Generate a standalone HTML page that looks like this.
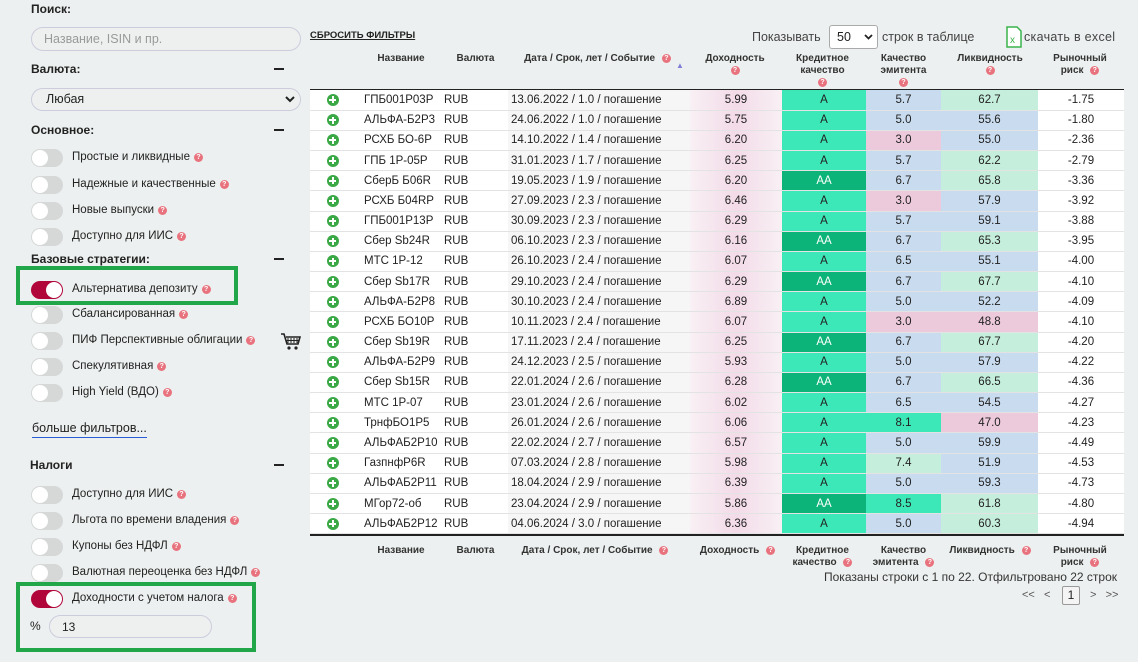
<!DOCTYPE html>
<html><head><meta charset="utf-8"><style>
*{box-sizing:border-box;margin:0;padding:0}
body{width:1138px;height:662px;background:#edf0f0;font-family:"Liberation Sans",sans-serif;color:#222;position:relative;overflow:hidden;font-size:12px}
.a{position:absolute}
.h{font-weight:bold;font-size:12px;color:#222}
.minus{position:absolute;left:274px;width:10px;height:2px;background:#222}
.tg{position:absolute;left:31px;width:32px;height:18px;border-radius:9px;background:#d6d8d8}
.tg::after{content:"";position:absolute;left:1px;top:1px;width:16px;height:16px;border-radius:50%;background:#fff}
.tg.on{background:#b0063a}
.tg.on::after{left:15px}
.lb{position:absolute;left:72px;font-size:11.5px;color:#222}
.q{display:inline-block;width:9px;height:9px;border-radius:50%;background:#e8737e;color:#fff;font-size:7px;line-height:9px;text-align:center;font-weight:bold;vertical-align:1px;margin-left:4px}
.inp{position:absolute;border:1px solid #ccd;border-radius:12px;background:#eef0f0}
.grn{position:absolute;border:4px solid #21a74a}
table{position:absolute;left:310px;top:90px;width:814px;border-collapse:collapse;table-layout:fixed;font-size:11.5px;background:#fff}
td{height:20.18px;border-bottom:1px solid #e3e3e3;padding:0;white-space:nowrap}
td.n{padding-left:9px}
td.r{padding-left:4px}
td.c{text-align:center}
td.p{text-align:center}
.pl{display:inline-block;width:12px;height:12px;border-radius:50%;background:#3aa845;position:relative;vertical-align:middle}
.pl::before{content:"";position:absolute;left:2.5px;top:5px;width:7px;height:2px;background:#fff}
.pl::after{content:"";position:absolute;left:5px;top:2.5px;width:2px;height:7px;background:#fff}
td.d{background:#f6f6f6;padding-left:3px}
td.y{background:linear-gradient(90deg,#f8f0f4,#f3dbe8,#f8f0f4);text-align:center}
.A{background:#3de8b8;text-align:center}
.AA{background:#0db47a;color:#fff;text-align:center}
.b{background:#c9dcef;text-align:center}
.k{background:#edcadb;text-align:center}
.g{background:#c5efdc;text-align:center}
.G{background:#3de8b8;text-align:center}
.th{position:absolute;font-size:10px;font-weight:bold;color:#333;text-align:center;line-height:12px}
</style></head><body>

<div class="a h" style="left:31px;top:2px">Поиск:</div>
<div class="inp" style="left:31px;top:27px;width:270px;height:24px"></div>
<div class="a" style="left:44px;top:32px;color:#999;font-size:12.5px">Название, ISIN и пр.</div>
<div class="a h" style="left:31px;top:62px">Валюта:</div><div class="minus" style="top:68px"></div>
<div class="inp" style="left:31px;top:88px;width:270px;height:23px"></div>
<div class="a" style="left:46px;top:92px;font-size:12.5px">Любая</div>
<svg class="a" style="left:285px;top:96px" width="10" height="7" viewBox="0 0 10 7"><path d="M1 1l4 4 4-4" fill="none" stroke="#222" stroke-width="2"/></svg>
<div class="a h" style="left:31px;top:123px">Основное:</div><div class="minus" style="top:129px"></div>

<div class="tg" style="top:149px"></div><div class="lb" style="top:151px">Простые и ликвидные<span class="q">?</span></div>
<div class="tg" style="top:176px"></div><div class="lb" style="top:178px">Надежные и качественные<span class="q">?</span></div>
<div class="tg" style="top:202px"></div><div class="lb" style="top:204px">Новые выпуски<span class="q">?</span></div>
<div class="tg" style="top:228px"></div><div class="lb" style="top:230px">Доступно для ИИС<span class="q">?</span></div>
<div class="a h" style="left:31px;top:252px">Базовые стратегии:</div><div class="minus" style="top:258px"></div>
<div class="grn" style="left:16px;top:266px;width:222px;height:39px"></div>
<div class="tg on" style="top:281px"></div><div class="lb" style="top:283px">Альтернатива депозиту<span class="q">?</span></div>
<div class="tg" style="top:306px"></div><div class="lb" style="top:308px">Сбалансированная<span class="q">?</span></div>
<div class="tg" style="top:332px"></div><div class="lb" style="top:334px">ПИФ Перспективные облигации<span class="q">?</span></div>
<svg class="a" style="left:281px;top:333px" width="20" height="18" viewBox="0 0 20 18"><path d="M0 1h3l3 10h11l2-7H5" fill="none" stroke="#222" stroke-width="1.6"/><path d="M7 5v5M10 5v5M13 5v5M16 5v5M5 7.5h13" stroke="#222" stroke-width="1"/><circle cx="8" cy="15" r="1.6" fill="#222"/><circle cx="15" cy="15" r="1.6" fill="#222"/></svg>
<div class="tg" style="top:358px"></div><div class="lb" style="top:360px">Спекулятивная<span class="q">?</span></div>
<div class="tg" style="top:384px"></div><div class="lb" style="top:386px">High Yield (ВДО)<span class="q">?</span></div>
<div class="a" style="left:32px;top:421px;font-size:12.5px;border-bottom:1px solid #2a5bd7;padding-bottom:2px">больше фильтров...</div>
<div class="a h" style="left:30px;top:458px">Налоги</div><div class="minus" style="top:464px"></div>
<div class="tg" style="top:486px"></div><div class="lb" style="top:488px">Доступно для ИИС<span class="q">?</span></div>
<div class="tg" style="top:512px"></div><div class="lb" style="top:514px">Льгота по времени владения<span class="q">?</span></div>
<div class="tg" style="top:538px"></div><div class="lb" style="top:540px">Купоны без НДФЛ<span class="q">?</span></div>
<div class="tg" style="top:564px"></div><div class="lb" style="top:566px">Валютная переоценка без НДФЛ<span class="q">?</span></div>
<div class="grn" style="left:16px;top:582px;width:240px;height:70px"></div>
<div class="tg on" style="top:590px"></div><div class="lb" style="top:592px">Доходности с учетом налога<span class="q">?</span></div>
<div class="a" style="left:30px;top:619px;font-size:12px">%</div>
<div class="inp" style="left:49px;top:615px;width:163px;height:23px"></div>
<div class="a" style="left:62px;top:620px;font-size:12px">13</div>

<div class="a" style="left:310px;top:30px;font-size:9.5px;font-weight:bold;text-decoration:underline">СБРОСИТЬ ФИЛЬТРЫ</div>
<div class="a" style="left:752px;top:30px;font-size:12.5px;color:#444">Показывать</div>
<div class="a" style="left:829px;top:25px;width:49px;height:24px;border:1px solid #aaa;border-radius:3px;background:#fff;font-size:12.5px"><span class="a" style="left:7px;top:4px">50</span><svg class="a" style="left:34px;top:8px" width="9" height="6" viewBox="0 0 9 6"><path d="M1 1l3.5 3.5L8 1" fill="none" stroke="#222" stroke-width="1.8"/></svg></div>
<div class="a" style="left:882px;top:30px;font-size:12.5px;color:#444">строк в таблице</div>
<svg class="a" style="left:1006px;top:26px" width="16" height="22" viewBox="0 0 16 22"><path d="M1 1h10l4 4v16H1z" fill="#fff" stroke="#3ab34a" stroke-width="1.5"/><text x="4" y="17" font-size="10" fill="#3ab34a" font-family="Liberation Sans">x</text></svg>
<div class="a" style="left:1024px;top:30px;font-size:12.5px;color:#444;letter-spacing:.3px">скачать в excel</div>

<div class="th" style="left:362px;top:53px;width:78px">Название</div>
<div class="th" style="left:448px;top:53px;width:55px">Валюта</div>
<div class="th" style="left:515px;top:53px;width:165px">Дата / Срок, лет / Событие <span class="q">?</span></div>
<div class="a" style="left:676px;top:61px;color:#7f7fd6;font-size:8px">&#9650;</div>
<div class="th" style="left:695px;top:53px;width:80px">Доходность<br><span class="q" style="margin:0">?</span></div>
<div class="th" style="left:785px;top:53px;width:75px">Кредитное<br>качество<br><span class="q" style="margin:0">?</span></div>
<div class="th" style="left:866px;top:53px;width:75px">Качество<br>эмитента<br><span class="q" style="margin:0">?</span></div>
<div class="th" style="left:945px;top:53px;width:90px">Ликвидность<br><span class="q" style="margin:0">?</span></div>
<div class="th" style="left:1045px;top:53px;width:70px">Рыночный<br>риск <span class="q">?</span></div>
<div class="a" style="left:310px;top:89px;width:814px;height:1.5px;background:#222"></div>

<table>
<colgroup><col style="width:45px"><col style="width:85px"><col style="width:68px"><col style="width:182px"><col style="width:92px"><col style="width:84px"><col style="width:75px"><col style="width:97px"><col style="width:86px"></colgroup>
<tr><td class="p"><i class="pl"></i></td><td class="n">ГПБ001Р03Р</td><td class="r">RUB</td><td class="d">13.06.2022 / 1.0 / погашение</td><td class="y">5.99</td><td class="A">A</td><td class="b">5.7</td><td class="g">62.7</td><td class="c">-1.75</td></tr>
<tr><td class="p"><i class="pl"></i></td><td class="n">АЛЬФА-Б2Р3</td><td class="r">RUB</td><td class="d">24.06.2022 / 1.0 / погашение</td><td class="y">5.75</td><td class="A">A</td><td class="b">5.0</td><td class="b">55.6</td><td class="c">-1.80</td></tr>
<tr><td class="p"><i class="pl"></i></td><td class="n">РСХБ БО-6Р</td><td class="r">RUB</td><td class="d">14.10.2022 / 1.4 / погашение</td><td class="y">6.20</td><td class="A">A</td><td class="k">3.0</td><td class="b">55.0</td><td class="c">-2.36</td></tr>
<tr><td class="p"><i class="pl"></i></td><td class="n">ГПБ 1Р-05Р</td><td class="r">RUB</td><td class="d">31.01.2023 / 1.7 / погашение</td><td class="y">6.25</td><td class="A">A</td><td class="b">5.7</td><td class="g">62.2</td><td class="c">-2.79</td></tr>
<tr><td class="p"><i class="pl"></i></td><td class="n">СберБ Б06R</td><td class="r">RUB</td><td class="d">19.05.2023 / 1.9 / погашение</td><td class="y">6.20</td><td class="AA">AA</td><td class="b">6.7</td><td class="g">65.8</td><td class="c">-3.36</td></tr>
<tr><td class="p"><i class="pl"></i></td><td class="n">РСХБ Б04RP</td><td class="r">RUB</td><td class="d">27.09.2023 / 2.3 / погашение</td><td class="y">6.46</td><td class="A">A</td><td class="k">3.0</td><td class="b">57.9</td><td class="c">-3.92</td></tr>
<tr><td class="p"><i class="pl"></i></td><td class="n">ГПБ001Р13Р</td><td class="r">RUB</td><td class="d">30.09.2023 / 2.3 / погашение</td><td class="y">6.29</td><td class="A">A</td><td class="b">5.7</td><td class="b">59.1</td><td class="c">-3.88</td></tr>
<tr><td class="p"><i class="pl"></i></td><td class="n">Сбер Sb24R</td><td class="r">RUB</td><td class="d">06.10.2023 / 2.3 / погашение</td><td class="y">6.16</td><td class="AA">AA</td><td class="b">6.7</td><td class="g">65.3</td><td class="c">-3.95</td></tr>
<tr><td class="p"><i class="pl"></i></td><td class="n">МТС 1Р-12</td><td class="r">RUB</td><td class="d">26.10.2023 / 2.4 / погашение</td><td class="y">6.07</td><td class="A">A</td><td class="b">6.5</td><td class="b">55.1</td><td class="c">-4.00</td></tr>
<tr><td class="p"><i class="pl"></i></td><td class="n">Сбер Sb17R</td><td class="r">RUB</td><td class="d">29.10.2023 / 2.4 / погашение</td><td class="y">6.29</td><td class="AA">AA</td><td class="b">6.7</td><td class="g">67.7</td><td class="c">-4.10</td></tr>
<tr><td class="p"><i class="pl"></i></td><td class="n">АЛЬФА-Б2Р8</td><td class="r">RUB</td><td class="d">30.10.2023 / 2.4 / погашение</td><td class="y">6.89</td><td class="A">A</td><td class="b">5.0</td><td class="b">52.2</td><td class="c">-4.09</td></tr>
<tr><td class="p"><i class="pl"></i></td><td class="n">РСХБ БО10Р</td><td class="r">RUB</td><td class="d">10.11.2023 / 2.4 / погашение</td><td class="y">6.07</td><td class="A">A</td><td class="k">3.0</td><td class="k">48.8</td><td class="c">-4.10</td></tr>
<tr><td class="p"><i class="pl"></i></td><td class="n">Сбер Sb19R</td><td class="r">RUB</td><td class="d">17.11.2023 / 2.4 / погашение</td><td class="y">6.25</td><td class="AA">AA</td><td class="b">6.7</td><td class="g">67.7</td><td class="c">-4.20</td></tr>
<tr><td class="p"><i class="pl"></i></td><td class="n">АЛЬФА-Б2Р9</td><td class="r">RUB</td><td class="d">24.12.2023 / 2.5 / погашение</td><td class="y">5.93</td><td class="A">A</td><td class="b">5.0</td><td class="b">57.9</td><td class="c">-4.22</td></tr>
<tr><td class="p"><i class="pl"></i></td><td class="n">Сбер Sb15R</td><td class="r">RUB</td><td class="d">22.01.2024 / 2.6 / погашение</td><td class="y">6.28</td><td class="AA">AA</td><td class="b">6.7</td><td class="g">66.5</td><td class="c">-4.36</td></tr>
<tr><td class="p"><i class="pl"></i></td><td class="n">МТС 1Р-07</td><td class="r">RUB</td><td class="d">23.01.2024 / 2.6 / погашение</td><td class="y">6.02</td><td class="A">A</td><td class="b">6.5</td><td class="b">54.5</td><td class="c">-4.27</td></tr>
<tr><td class="p"><i class="pl"></i></td><td class="n">ТрнфБО1Р5</td><td class="r">RUB</td><td class="d">26.01.2024 / 2.6 / погашение</td><td class="y">6.06</td><td class="A">A</td><td class="G">8.1</td><td class="k">47.0</td><td class="c">-4.23</td></tr>
<tr><td class="p"><i class="pl"></i></td><td class="n">АЛЬФАБ2Р10</td><td class="r">RUB</td><td class="d">22.02.2024 / 2.7 / погашение</td><td class="y">6.57</td><td class="A">A</td><td class="b">5.0</td><td class="b">59.9</td><td class="c">-4.49</td></tr>
<tr><td class="p"><i class="pl"></i></td><td class="n">ГазпнфР6R</td><td class="r">RUB</td><td class="d">07.03.2024 / 2.8 / погашение</td><td class="y">5.98</td><td class="A">A</td><td class="g">7.4</td><td class="b">51.9</td><td class="c">-4.53</td></tr>
<tr><td class="p"><i class="pl"></i></td><td class="n">АЛЬФАБ2Р11</td><td class="r">RUB</td><td class="d">18.04.2024 / 2.9 / погашение</td><td class="y">6.39</td><td class="A">A</td><td class="b">5.0</td><td class="b">59.3</td><td class="c">-4.73</td></tr>
<tr><td class="p"><i class="pl"></i></td><td class="n">МГор72-об</td><td class="r">RUB</td><td class="d">23.04.2024 / 2.9 / погашение</td><td class="y">5.86</td><td class="AA">AA</td><td class="G">8.5</td><td class="g">61.8</td><td class="c">-4.80</td></tr>
<tr><td class="p"><i class="pl"></i></td><td class="n">АЛЬФАБ2Р12</td><td class="r">RUB</td><td class="d">04.06.2024 / 3.0 / погашение</td><td class="y">6.36</td><td class="A">A</td><td class="b">5.0</td><td class="g">60.3</td><td class="c">-4.94</td></tr>
</table>
<div class="a" style="left:310px;top:534px;width:814px;height:1.5px;background:#222"></div>

<div class="th" style="left:362px;top:545px;width:78px">Название</div>
<div class="th" style="left:448px;top:545px;width:55px">Валюта</div>
<div class="th" style="left:510px;top:545px;width:170px">Дата / Срок, лет / Событие <span class="q">?</span></div>
<div class="th" style="left:695px;top:545px;width:85px">Доходность <span class="q">?</span></div>
<div class="th" style="left:785px;top:545px;width:75px">Кредитное<br>качество <span class="q">?</span></div>
<div class="th" style="left:866px;top:545px;width:75px">Качество<br>эмитента <span class="q">?</span></div>
<div class="th" style="left:945px;top:545px;width:90px">Ликвидность <span class="q">?</span></div>
<div class="th" style="left:1045px;top:545px;width:70px">Рыночный<br>риск <span class="q">?</span></div>
<div class="a" style="left:824px;top:570px;font-size:12px;color:#333">Показаны строки с 1 по 22. Отфильтровано 22 строк</div>
<div class="a" style="left:1022px;top:589px;font-size:11px;color:#555">&lt;&lt; &nbsp;&nbsp;&lt;</div>
<div class="a" style="left:1062px;top:586px;width:18px;height:19px;border:1px solid #999;border-radius:2px;background:#f4f4f4;font-size:12px;text-align:center;line-height:17px">1</div>
<div class="a" style="left:1090px;top:589px;font-size:11px;color:#555">&gt; &nbsp;&nbsp;&gt;&gt;</div>
</body></html>
